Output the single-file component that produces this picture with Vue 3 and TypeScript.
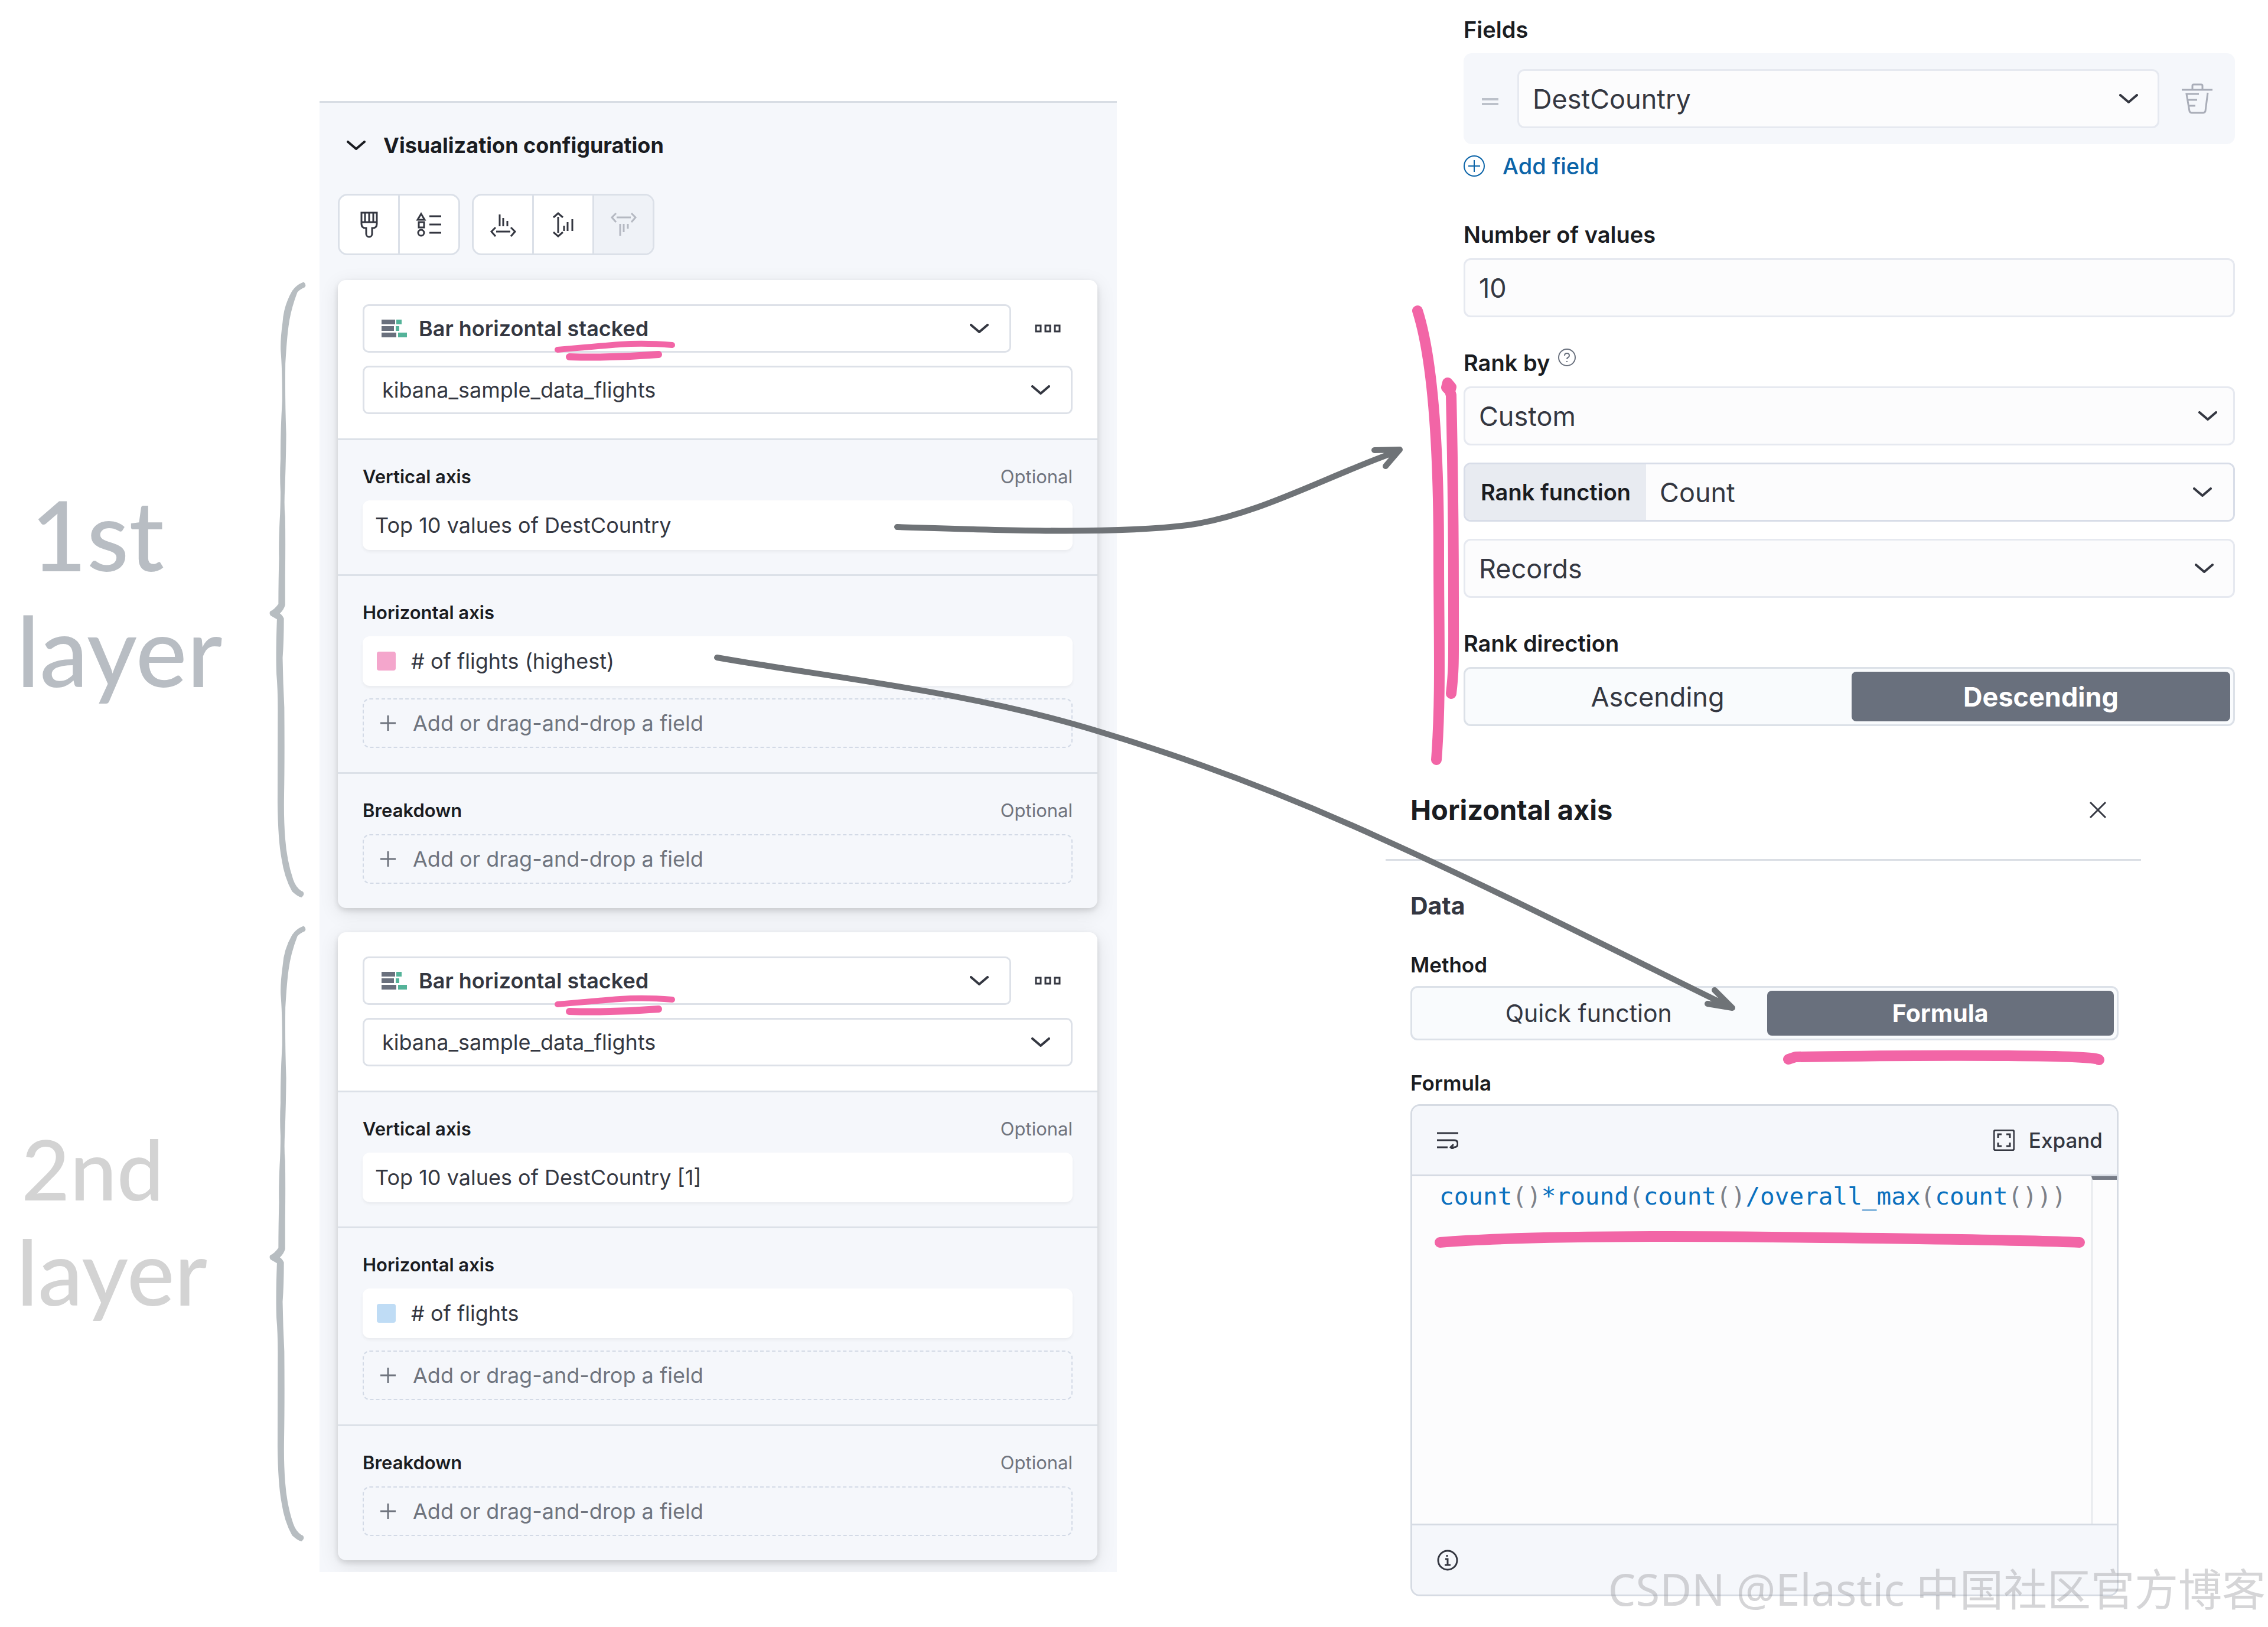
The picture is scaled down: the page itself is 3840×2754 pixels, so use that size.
<script setup lang="ts">
import { ref } from 'vue'

interface Dimension {
  label: string
  color?: string
}

interface Group {
  title: string
  optional: boolean
  items: Dimension[]
  canAdd: boolean
}

interface Layer {
  id: string
  chart: string
  dataView: string
  groups: Group[]
}

interface Token {
  text: string
  kind: 'fn' | 'paren'
}

function makeLayer(id: string, vertical: string, metric: string, color: string): Layer {
  return {
    id,
    chart: 'Bar horizontal stacked',
    dataView: 'kibana_sample_data_flights',
    groups: [
      { title: 'Vertical axis', optional: true, items: [{ label: vertical }], canAdd: false },
      { title: 'Horizontal axis', optional: false, items: [{ label: metric, color }], canAdd: true },
      { title: 'Breakdown', optional: true, items: [], canAdd: true },
    ],
  }
}

const layers = ref<Layer[]>([
  makeLayer('one', 'Top 10 values of DestCountry', '# of flights (highest)', '#f4a6cc'),
  makeLayer('two', 'Top 10 values of DestCountry [1]', '# of flights', '#bfdcf5'),
])

const field = ref('DestCountry')
const valueCount = ref('10')
const rankBy = ref('Custom')
const rankFunction = ref('Count')
const rankField = ref('Records')
const direction = ref('Descending')
const method = ref('Formula')

const formula = 'count()*round(count()/overall_max(count()))'
const tokens: Token[] = (formula.match(/[()]+|[^()]+/g) ?? []).map((text) => ({
  text,
  kind: /[()]/.test(text) ? 'paren' : 'fn',
}))

const bracePath =
  'M1440 53Q1405 60 1385 75Q1345 110 1340 150Q1328 195 1331 220Q1338 260 1338 340Q1329 420 1330 480Q1326 520 1330 560Q1330 600 1326 630Q1321 680 1323 720Q1320 780 1320 830Q1302 843 1281 848Q1275 853 1283 858L1313 867Q1307 950 1311 1000Q1318 1040 1317 1100L1316 1310Q1318 1400 1335 1445Q1348 1490 1385 1524Q1415 1538 1430 1538Q1448 1530 1435 1524Q1405 1517 1390 1495Q1360 1450 1352 1395Q1345 1350 1347 1290Q1350 1200 1348 1080Q1342 1020 1340 960Q1346 920 1346 865Q1338 856 1327 853Q1345 845 1352 833L1352 760Q1354 680 1352 620Q1346 590 1351 550Q1356 480 1357 420Q1351 340 1353 250Q1360 190 1368 160Q1378 120 1410 78Q1425 70 1445 66Q1455 60 1440 53Z'
</script>

<template>
  <div class="board">
    <aside class="notes">
      <p class="note"><span class="note-top">1st</span><span>layer</span></p>
      <p class="note note-second"><span class="note-top">2nd</span><span>layer</span></p>
    </aside>

    <section class="panel">
      <button class="panel-title" type="button">
        <svg class="chevron" viewBox="0 0 32 16"><path d="M2 2L16 14L30 2" /></svg>
        Visualization configuration
      </button>

      <div class="toolbar">
        <div class="tool-group">
          <button type="button" aria-label="Appearance">
            <svg class="tool" viewBox="0 0 42 42"><path d="M8 1H34V20Q34 27 27 27H26V37A5 5 0 0 1 16 37V27H15Q8 27 8 20ZM8 17H34M14 1V17M21 1V17M28 1V17" /></svg>
          </button>
          <button type="button" aria-label="Legend">
            <svg class="tool" viewBox="0 0 42 42"><path d="M7 3L13 13H1ZM3 17H12V26H3ZM21 7H41M21 21H41M21 35H41" /><circle cx="7" cy="35" r="5" /></svg>
          </button>
        </div>
        <div class="tool-group">
          <button type="button" aria-label="Bottom axis">
            <svg class="tool" viewBox="0 0 42 42"><path d="M8 26L1 33L8 41M34 26L41 33L34 41M9 33H33M15 4V24M21 10V24M28 15V24" /></svg>
          </button>
          <button type="button" aria-label="Left axis">
            <svg class="tool" viewBox="0 0 42 42"><path d="M4 9L12 2L20 9M4 34L12 41L20 34M12 8V35M22 23V32M28 17V32M36 12V32" /></svg>
          </button>
          <button type="button" aria-label="Top axis" disabled>
            <svg class="tool" viewBox="0 0 42 42"><path d="M8 2L1 9L8 17M34 2L41 9L34 17M9 9H33M15 20V40M21 20V34M28 20V28" /></svg>
          </button>
        </div>
      </div>

      <article v-for="layer in layers" :key="layer.id" class="card">
        <header class="card-head">
          <div class="chart-row">
            <div class="picker">
              <svg class="bars" viewBox="0 0 43 30">
                <path fill="#69707d" d="M0 0H23V8H0ZM0 11H21V19H0ZM0 22H25V30H0Z" />
                <path fill="#54b399" d="M25 0H34V8H25ZM24 11H30V19H24ZM28 22H43V30H28Z" />
              </svg>
              <select v-model="layer.chart" class="chart-select" aria-label="Chart type">
                <option>{{ layer.chart }}</option>
              </select>
              <svg class="chevron" viewBox="0 0 32 16"><path d="M2 2L16 14L30 2" /></svg>
            </div>
            <button class="more" type="button" aria-label="Layer actions">
              <svg viewBox="0 0 44 14"><path d="M2 2H10V12H2ZM18 2H26V12H18ZM34 2H42V12H34Z" /></svg>
            </button>
          </div>
          <div class="picker">
            <select v-model="layer.dataView" aria-label="Data view">
              <option>{{ layer.dataView }}</option>
            </select>
            <svg class="chevron" viewBox="0 0 32 16"><path d="M2 2L16 14L30 2" /></svg>
          </div>
        </header>

        <section v-for="group in layer.groups" :key="group.title" class="group">
          <div class="group-head">
            <h3>{{ group.title }}</h3>
            <span v-if="group.optional">Optional</span>
          </div>
          <button v-for="item in group.items" :key="item.label" class="item" type="button">
            <i v-if="item.color" class="swatch" :style="{ background: item.color }"></i>
            {{ item.label }}
          </button>
          <button v-if="group.canAdd" class="item item-empty" type="button">
            <svg viewBox="0 0 28 28"><path d="M14 1V27M1 14H27" /></svg>
            Add or drag-and-drop a field
          </button>
        </section>
      </article>
    </section>

    <main class="editors">
      <form class="terms" @submit.prevent>
        <label for="field">Fields</label>
        <div class="field-row">
          <svg class="handle" viewBox="0 0 28 12"><path d="M0 2H28M0 10H28" /></svg>
          <div class="box">
            <select id="field" v-model="field"><option>DestCountry</option></select>
            <svg class="chevron" viewBox="0 0 32 16"><path d="M2 2L16 14L30 2" /></svg>
          </div>
          <button class="trash" type="button" aria-label="Delete field">
            <svg viewBox="0 0 52 52"><path d="M0 11H52M18 11V4Q18 2 20 2H33Q35 2 35 4V11M29 18H8L13 47Q14 50 17 50H36Q39 50 40 47L44 16M11 28H26M13 38H23" /></svg>
          </button>
        </div>
        <button class="add-field" type="button">
          <svg viewBox="0 0 36 36"><circle cx="18" cy="18" r="17" /><path d="M18 8V28M8 18H28" /></svg>
          Add field
        </button>

        <label for="count" class="after-link">Number of values</label>
        <div class="box"><input id="count" v-model="valueCount" type="text" /></div>

        <label for="rank" class="spaced">
          Rank by
          <svg class="help" viewBox="0 0 30 30"><circle cx="15" cy="15" r="14" /><path d="M11 12Q11 8 15 8T19 12Q19 14 17 15T15 18M15 21V23" /></svg>
        </label>
        <div class="stack">
          <div class="box">
            <select id="rank" v-model="rankBy"><option>Custom</option></select>
            <svg class="chevron" viewBox="0 0 32 16"><path d="M2 2L16 14L30 2" /></svg>
          </div>
          <div class="prefixed">
            <label for="rank-fn">Rank function</label>
            <div class="box">
              <select id="rank-fn" v-model="rankFunction"><option>Count</option></select>
              <svg class="chevron" viewBox="0 0 32 16"><path d="M2 2L16 14L30 2" /></svg>
            </div>
          </div>
          <div class="box records">
            <select v-model="rankField" aria-label="Rank field"><option>Records</option></select>
            <svg class="chevron" viewBox="0 0 32 16"><path d="M2 2L16 14L30 2" /></svg>
          </div>
        </div>

        <h4 class="spaced">Rank direction</h4>
        <div class="segments">
          <button
            v-for="option in ['Ascending', 'Descending']"
            :key="option"
            type="button"
            :class="{ selected: direction === option }"
            @click="direction = option"
          >{{ option }}</button>
        </div>
      </form>

      <section class="axis">
        <header class="axis-head">
          <h2>Horizontal axis</h2>
          <button type="button" aria-label="Close">
            <svg viewBox="0 0 30 30"><path d="M2 2L28 28M28 2L2 28" /></svg>
          </button>
        </header>
        <div class="axis-body">
          <h3>Data</h3>
          <h4>Method</h4>
          <div class="segments segments-small">
            <button
              v-for="option in ['Quick function', 'Formula']"
              :key="option"
              type="button"
              :class="{ selected: method === option }"
              @click="method = option"
            >{{ option }}</button>
          </div>
          <h4 id="formula-label" class="formula-label">Formula</h4>
          <div class="code-box">
            <div class="code-bar">
              <button type="button" aria-label="Word wrap">
                <svg class="wrap" viewBox="0 0 36 30"><path d="M0 3H36M0 15H29Q35 15 35 21T29 27H24M28 22L23 27L28 31M0 27H18" /></svg>
              </button>
              <button type="button">
                <svg class="expand" viewBox="0 0 36 36"><rect x="1" y="1" width="34" height="34" rx="3" /><path d="M8 14V8H14M22 8H28V14M28 22V28H22M14 28H8V22" /></svg>
                Expand
              </button>
            </div>
            <div class="code-area">
              <div class="code" role="textbox" contenteditable="true" aria-labelledby="formula-label"><span v-for="(token, i) in tokens" :key="i" :class="token.kind">{{ token.text }}</span></div>
              <div class="ruler"></div>
            </div>
            <div class="code-foot">
              <svg viewBox="0 0 36 36"><circle cx="18" cy="18" r="16" /><path d="M14 16H18V26M13 26H23M17 9V12" /></svg>
            </div>
          </div>
        </div>
      </section>
    </main>

    <svg class="ink" viewBox="0 0 3840 2754" preserveAspectRatio="none" aria-hidden="true">
      <g fill="#b7bdc1">
        <path transform="translate(0 440) scale(.3571 .7015)" :d="bracePath" />
        <path transform="translate(0 1530) scale(.3571 .7015)" :d="bracePath" />
      </g>
      <g class="pink">
        <g v-for="dy in [0, 1108]" :key="dy" :transform="`translate(0 ${dy})`">
          <path class="thin" d="M944 592Q1010 586 1050 583T1138 584" />
          <path class="mid" d="M964 604Q1040 606 1115 600" />
        </g>
        <path d="M2400 526C2430 620 2436 800 2436 940S2440 1180 2432 1286" />
        <path d="M2451 650L2457 669C2459 760 2461 900 2461 1010S2462 1130 2457 1174M2449 656L2451 648L2457 655L2455 662Z" />
        <path d="M3028 1793L3040 1789Q3250 1786 3400 1787T3554 1794" />
        <path d="M2438 2103Q2600 2090 3000 2094T3521 2103" />
      </g>
      <g class="gray">
        <path d="M1519 892C1680 897 1880 905 2010 889C2130 873 2250 804 2366 764M2327 762L2370 761L2346 789" />
        <path d="M1214 1113C1400 1146 1640 1170 1860 1238C2040 1292 2200 1356 2340 1420C2540 1510 2740 1612 2930 1705M2903 1676L2933 1706L2891 1699" />
      </g>
    </svg>

    <p class="watermark">CSDN @Elastic 中国社区官方博客</p>
  </div>
</template>

<style>
body {
  background: #fff;
}
</style>

<style scoped>
.board {
  position: relative;
  display: grid;
  grid-template-columns: 541fr 1350fr 455fr 1494fr;
  align-items: start;
  min-height: 2754px;
  box-sizing: border-box;
  overflow: hidden;
  font-family: Inter, "Liberation Sans", sans-serif;
  font-size: 36px;
  color: #343741;
}
.board *, .board *::before { box-sizing: border-box; }
h2, h3, h4, p { margin: 0; }
button, select, input {
  font: inherit;
  color: inherit;
  background: none;
  border: 0;
  padding: 0;
  margin: 0;
  appearance: none;
  outline: 0;
}
svg { display: block; fill: none; stroke: currentColor; stroke-width: 2; flex: none; }
.chevron { width: 32px; height: 16px; stroke-width: 4; stroke-linecap: round; stroke-linejoin: round; }

.notes { padding: 806px 0 0 28px; }
.note {
  display: flex;
  flex-direction: column;
  font: 500 164px/196px Lato, sans-serif;
  color: #b8bdc3;
}
.note-top { padding-left: 24px; }
.note-second {
  margin-top: 692px;
  line-height: 174px;
  font-size: 152px;
  color: #d3d3d3;
}
.note-second .note-top { padding-left: 8px; font-size: 142px; }

.panel {
  grid-column: 2;
  margin-top: 171px;
  padding: 44px 33px 20px 31px;
  border-top: 3px solid #d8dde4;
  background: #f5f7fb;
  overflow: hidden;
}
.panel-title {
  display: flex;
  align-items: center;
  gap: 30px;
  padding-left: 15px;
  height: 56px;
  font-weight: 700;
  color: #1a1c21;
}
.toolbar { display: flex; gap: 20px; margin-top: 54px; }
.tool-group {
  display: flex;
  border: 3px solid #dbe0e8;
  border-radius: 16px;
  background: #fff;
  overflow: hidden;
}
.tool-group button { display: grid; place-items: center; width: 99px; height: 98px; }
.tool-group button + button { width: 102px; border-left: 3px solid #dbe0e8; }
.tool-group button:disabled { background: #eff2f7; color: #b5b9c2; }
.tool { width: 42px; height: 42px; stroke-width: 3; overflow: visible; }

.card {
  margin-top: 42px;
  border-radius: 14px;
  background: #f5f7fb;
  box-shadow: 0 4px 10px rgba(0, 0, 0, .12), 0 8px 32px rgba(0, 0, 0, .1);
  overflow: hidden;
}
.card + .card { margin-top: 41px; }
.card-head { display: flex; flex-direction: column; gap: 22px; padding: 41px 42px; background: #fff; }
.chart-row { display: flex; }
.chart-row .picker { flex: 1; }
.picker { display: grid; align-items: center; }
.picker > * { grid-area: 1 / 1; }
.picker select {
  width: 100%;
  height: 82px;
  padding: 0 30px;
  border: 3px solid #dde1e8;
  border-radius: 10px;
}
.picker .chart-select { padding-left: 92px; font-weight: 600; }
.picker .chevron { justify-self: end; margin-right: 38px; pointer-events: none; }
.bars { width: 43px; height: 30px; margin-left: 32px; stroke: none; }
.more { display: grid; place-items: center; width: 104px; padding-left: 20px; }
.more svg { width: 44px; height: 14px; stroke-width: 3; }

.group { padding: 39px 42px 41px; border-top: 3px solid #dce1e8; }
.group-head { display: flex; justify-content: space-between; margin-bottom: 17px; font-size: 31px; line-height: 46px; color: #6f747e; }
.group-head h3 { font-size: 31px; font-weight: 600; color: #1a1c21; }
.item {
  display: flex;
  align-items: center;
  width: 100%;
  height: 84px;
  padding-left: 21px;
  border-radius: 12px;
  background: #fff;
  box-shadow: 0 3px 5px rgba(0, 0, 0, .05);
}
.swatch { width: 32px; height: 32px; margin: 0 26px 0 3px; border-radius: 4px; }
.item-empty {
  padding-left: 27px;
  border: 2px dashed #d3dae6;
  background: none;
  box-shadow: none;
  color: #6f747e;
}
.item + .item-empty { margin-top: 21px; }
.item-empty svg { width: 28px; height: 28px; margin-right: 28px; stroke-width: 3; }

.editors { grid-column: 4; padding-top: 26px; }
.terms { display: flex; flex-direction: column; margin: 0 56px 0 132px; font-size: 45px; }
.terms > label, .terms > h4 {
  display: flex;
  gap: 14px;
  margin-bottom: 16px;
  font-size: 38px;
  font-weight: 600;
  line-height: 48px;
  color: #1a1c21;
}
.terms > .after-link { margin-top: 68px; }
.terms > .spaced { margin-top: 53px; }
.box { display: grid; align-items: center; flex: 1; }
.box > * { grid-area: 1 / 1; }
.box select, .box input {
  width: 100%;
  height: 100px;
  padding: 0 23px;
  border: 3px solid #e6e9f0;
  border-radius: 12px;
  background: #fcfcfd;
}
.box .chevron { justify-self: end; margin-right: 30px; pointer-events: none; }
.field-row {
  display: flex;
  align-items: center;
  height: 154px;
  border-radius: 14px;
  background: #f5f7fb;
}
.field-row .chevron, .stack .records .chevron { margin-right: 36px; }
.handle { width: 28px; height: 12px; margin: 10px 32px 0 31px; color: #bcc1ca; stroke-width: 4; }
.trash { width: 128px; padding-left: 38px; color: #a9adb8; }
.trash svg { width: 52px; height: 52px; stroke-width: 3; }
.add-field {
  display: flex;
  align-items: center;
  gap: 30px;
  height: 48px;
  margin-top: 13px;
  font-size: 38px;
  font-weight: 500;
  color: #0b64a8;
}
.add-field svg { width: 36px; height: 36px; }
.help { width: 30px; height: 30px; color: #69707d; }
.stack { display: flex; flex-direction: column; gap: 29px; }
.prefixed { display: flex; border: 3px solid #d8dde8; border-radius: 12px; overflow: hidden; }
.prefixed label {
  padding: 0 26px;
  background: #e8ebf1;
  font-size: 38px;
  font-weight: 600;
  line-height: 94px;
  color: #1a1c21;
}
.prefixed select { height: 94px; border: 0; border-radius: 0; }
.stack .prefixed .chevron { margin-right: 36px; }
.segments {
  display: grid;
  grid-template-columns: 1fr 1fr;
  gap: 8px;
  height: 100px;
  padding: 5px;
  border: 3px solid #dce1e8;
  border-radius: 12px;
  background: #f9fbfd;
}
.segments button { border-radius: 8px; }
.segments .selected { background: #69707d; color: #fff; font-weight: 700; }

.axis { margin: 112px 215px 0 0; }
.axis-head {
  display: flex;
  justify-content: space-between;
  padding: 0 58px 53px 42px;
  border-bottom: 3px solid #dadee4;
}
.axis-head h2 { font-size: 47px; line-height: 60px; font-weight: 700; color: #1a1c21; }
.axis-head svg { width: 30px; height: 30px; stroke-width: 3; }
.axis-body { padding: 52px 38px 0 42px; }
.axis-body h3 { font-size: 41px; line-height: 48px; font-weight: 700; }
.axis-body h4 { margin: 54px 0 14px; font-size: 35px; line-height: 44px; font-weight: 600; color: #1a1c21; }
.axis-body .formula-label { margin-top: 50px; }
.segments-small { height: 92px; font-size: 41px; }
.code-box { border: 3px solid #d6dbe3; border-radius: 16px; overflow: hidden; background: #fcfcfd; }
.code-bar, .code-foot { display: flex; align-items: center; justify-content: space-between; height: 119px; background: #f5f7fb; }
.code-bar { padding: 0 24px 0 42px; border-bottom: 3px solid #d6dbe3; }
.code-bar button { display: flex; align-items: center; gap: 24px; font-size: 35px; font-weight: 500; }
.wrap { width: 36px; height: 30px; stroke-width: 3; }
.expand { width: 36px; height: 36px; stroke-width: 3; }
.code-area { display: flex; min-height: 588px; }
.code {
  flex: 1;
  padding: 9px 0 0 46px;
  font: 41px/50px "DejaVu Sans Mono", monospace;
  outline: 0;
}
.fn { color: #0b70be; }
.paren { color: #7d8189; }
.ruler { width: 43px; border-left: 2px solid #e3e6ea; border-top: 6px solid #767b86; }
.code-foot { padding-left: 42px; border-top: 3px solid #d6dbe3; height: 120px; }
.code-foot svg { width: 36px; height: 36px; stroke-width: 3; }

.ink { position: absolute; inset: 0; width: 100%; height: 2754px; pointer-events: none; stroke: none; }
.pink, .gray { stroke-linecap: round; stroke-linejoin: round; }
.pink { stroke: #f265a6; stroke-width: 18; }
.pink .thin { stroke-width: 10; }
.pink .mid { stroke-width: 12; }
.gray { stroke: #6f7377; stroke-width: 10; }
.watermark {
  position: absolute;
  right: 4px;
  bottom: 24px;
  font: 74px/80px "Noto Sans", "Noto Sans CJK SC", sans-serif;
  color: rgba(150, 150, 155, .4);
}
</style>
